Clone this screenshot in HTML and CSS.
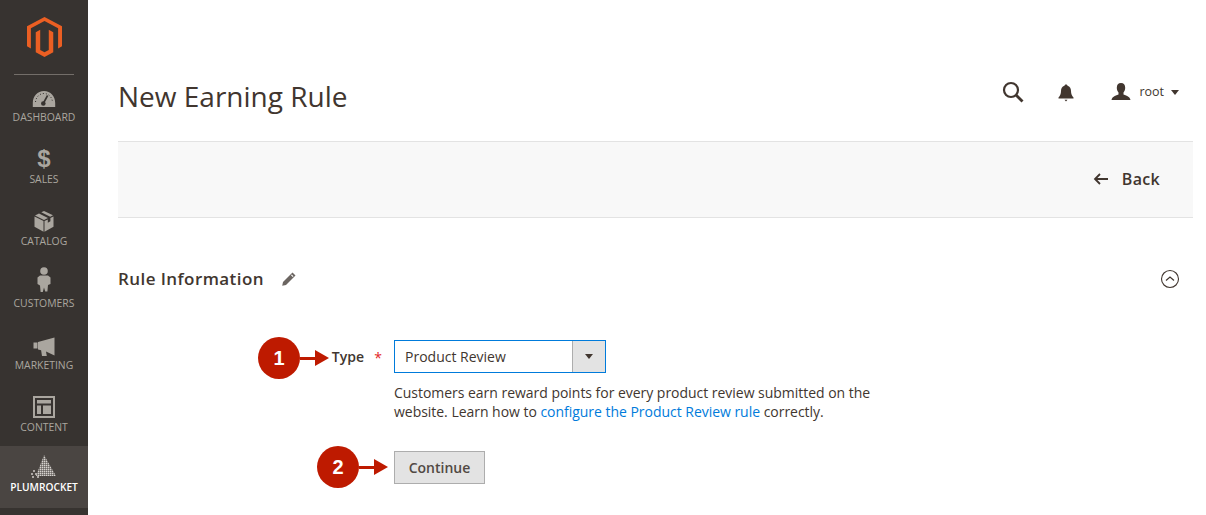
FILE: index.html
```html
<!DOCTYPE html>
<html lang="en">
<head>
<meta charset="utf-8">
<title>New Earning Rule</title>
<link rel="stylesheet" href="styles.css">
</head>
<body>
<div class="app">
  <nav class="side">
    <div class="logo">
      <svg width="35" height="40" viewBox="3 1.600 18 22.400" preserveAspectRatio="none"><path fill="#eb5f23" d="M12 24l-4.500-2.600V10.100l2.300-1.300v11.300l2.200 1.300 2.200-1.300V8.800l2.300 1.300v11.300zM21 6.800V18l-2 1.200V7.900L12 3.900 5 7.900v11.300L3 18V6.800l9-5.200z"/></svg>
    </div>
    <div class="rule"></div>
    <a class="item"><span class="ico"><svg width="24" height="18" viewBox="0 0 24 18"><path fill="#aaa69f" d="M12 1C5.500 1 .8 6.400.8 13v4h22.400v-4C23.200 6.400 18.500 1 12 1z"/><path stroke="#373330" stroke-width="1.600" d="M15.600 5.500L11.800 12.500"/><circle cx="11.300" cy="13.500" r="2.300" fill="#373330"/><path stroke="#373330" stroke-width="1" stroke-dasharray="1 2" fill="none" d="M3.500 12C4 7 7.500 3.500 12 3.500S20 7 20.500 12"/></svg></span><span class="lbl">DASHBOARD</span></a>
    <a class="item"><span class="ico ico-low"><span class="dollar">$</span></span><span class="lbl">SALES</span></a>
    <a class="item"><span class="ico"><svg width="20" height="21" viewBox="0 0 20 21"><path fill="#aaa69f" d="M10 0l9 4.300-2.800 1.500L7.300 1.300zM5 2.400l9 4.500-4 2L1 4.400zM.5 5.600l9 4.500v10.700l-9-5zM19.500 5.600v10.200l-9 5V10.100l3.300-1.700v3.300l2.600-1.400V6.900z"/></svg></span><span class="lbl">CATALOG</span></a>
    <a class="item"><span class="ico ico-up"><svg width="14" height="25" viewBox="0 0 14 25"><circle cx="7" cy="4" r="3.800" fill="#aaa69f"/><path fill="#aaa69f" d="M3 8.500h8l2.500 2v6.500l-2.500 1-.6 6.500H8.200L7 20.500 5.800 25H3.600L3 18.500 .5 17v-6.500z"/></svg></span><span class="lbl">CUSTOMERS</span></a>
    <a class="item"><span class="ico"><svg width="22" height="19" viewBox="0 0 22 19"><path fill="#aaa69f" d="M.5 5.500h4v6h-4zM5 5L21.500 .5v18L13 14.500l.8 4.500H9l-.9-5.800L5 12.500z"/></svg></span><span class="lbl">MARKETING</span></a>
    <a class="item"><span class="ico"><svg width="22" height="22" viewBox="0 0 22 22"><path fill="#aaa69f" fill-rule="evenodd" d="M0 0h22v22H0zM2 2v18h18V2z"/><path fill="#aaa69f" d="M4 4h14v3.500H4zM4 9.500h4V18H4zM10 9.500h8V18h-8z"/></svg></span><span class="lbl">CONTENT</span></a>
    <a class="item active"><span class="ico"><svg width="28" height="23" viewBox="0 0 28 23"><defs><pattern id="dots" width="2" height="2" patternUnits="userSpaceOnUse"><rect width="1.500" height="1.500" fill="#d5d2ce"/></pattern></defs><path fill="url(#dots)" d="M14 0L26 21H6z"/><path fill="#d5d2ce" opacity=".7" d="M3 15h2v2H3zM1 18h2v2H1zM5 18h2v2H5zM2 21h2v2H2zM7 21h2v2H7z"/></svg></span><span class="lbl">PLUMROCKET</span></a>
  </nav>
  <main class="main">
    <header class="top">
      <h1 class="title">New Earning Rule</h1>
      <div class="tools">
        <svg class="t-search" width="22" height="22" viewBox="0 0 22 22"><circle cx="9" cy="9" r="7" fill="none" stroke="#41362f" stroke-width="2.200"/><path d="M14 14l6.500 6.500" stroke="#41362f" stroke-width="2.800"/></svg>
        <svg class="t-bell" width="16" height="18" viewBox="0 0 16 18"><path fill="#41362f" d="M8 0.500c1 0 1.500.6 1.500 1.300 2.500.7 3.500 2.800 3.500 5.200 0 3 1 5 2.500 6.500v1H.5v-1C2 12 3 10 3 7c0-2.400 1-4.500 3.500-5.200C6.500 1.100 7 .5 8 .5zM6.500 15.800h3L8 17.500z"/></svg>
        <span class="user">
          <svg width="20" height="18" viewBox="0 0 20 18"><path fill="#41362f" d="M10 0c2.800 0 4.200 2 4.200 4.800 0 2-.8 3.700-1.700 4.700v2c1 .7 6.500 1.500 7 5.500H.5c.5-4 6-4.800 7-5.500v-2C6.600 8.500 5.800 6.800 5.800 4.800 5.800 2 7.200 0 10 0z"/></svg>
          <span class="uname">root</span><span class="caret"></span>
        </span>
      </div>
    </header>
    <div class="bar">
      <a class="back"><svg width="16" height="12" viewBox="0 0 16 12"><path d="M15 6H2M7 1L2 6l5 5" fill="none" stroke="#41362f" stroke-width="1.800"/></svg><span>Back</span></a>
    </div>
    <section class="sec-head">
      <h2 class="sec-title">Rule Information</h2>
      <svg class="pen" width="16" height="16" viewBox="0 0 16 16"><path fill="#6b6561" d="M11.500 1.500l3 3L5 14l-3.800.8.800-3.800z"/><path fill="#fff" d="M10 4.300l.8-.8 1.700 1.700-.8.800z"/></svg>
      <svg class="collapse" width="20" height="20" viewBox="0 0 20 20"><circle cx="10" cy="10" r="8.500" fill="none" stroke="#41362f" stroke-width="1.100"/><path d="M6 11.500l4-3.500 4 3.500" fill="none" stroke="#41362f" stroke-width="1.200"/></svg>
    </section>
    <form class="form">
      <div class="row">
        <label class="label">Type</label><span class="req">*</span>
        <div class="field">
          <div class="select"><span class="val">Product Review</span><span class="sbtn"><i></i></span></div>
          <p class="note">Customers earn reward points for every product review submitted on the website. Learn how to <a class="link">configure the Product Review rule</a> correctly.</p>
        </div>
        <span class="call c1"><b>1</b><i class="shaft"></i><i class="head"></i></span>
      </div>
      <div class="row act">
        <div class="field">
          <button type="button" class="btn">Continue</button>
        </div>
        <span class="call c2"><b>2</b><i class="shaft"></i><i class="head"></i></span>
      </div>
    </form>
  </main>
</div>
</body>
</html>
```

FILE: styles.css
```css
* { box-sizing: border-box; }
html, body { margin: 0; height: 515px; overflow: hidden; background: #fff; }
body { font-family: "Open Sans", sans-serif; color: #41362f; }
.app { display: flex; height: 515px; }
.side { width: 88px; flex: none; background: #373330; display: flex; flex-direction: column; align-items: stretch; }
.logo { height: 74px; padding-top: 17px; display: flex; justify-content: center; align-items: flex-start; }
.rule { height: 1px; margin: 0 14px -1px; background: #736e69; }
.item { height: 62px; display: flex; flex-direction: column; align-items: center; padding-top: 7px; }
.ico { height: 27px; display: flex; align-items: flex-end; justify-content: center; }
.ico-up { padding-bottom: 2px; }
.ico-low { align-items: flex-start; padding-top: 2px; }
.lbl { font-size: 10.4px; line-height: 14px; margin-top: 2px; color: #aaa69f; white-space: nowrap; }
.dollar { font-family: "Liberation Sans", sans-serif; font-weight: 700; font-size: 24px; line-height: 27px; color: #aaa69f; }
.item.active { background: #4a4542; padding-top: 6px; }
.item.active .ico { height: 26px; }
.item.active .lbl { color: #fff; font-weight: 600; font-size: 10.2px; }
.main { flex: 1; padding: 0 13px 0 30px; min-width: 0; }
.top { height: 141px; display: flex; justify-content: space-between; align-items: flex-start; }
.title { margin: 75px 0 0; font-size: 28px; line-height: 42px; font-weight: 400; }
.tools { display: flex; align-items: center; padding-top: 81px; margin-right: 4px; }
.t-search { margin-right: 34px; }
.t-bell { margin-right: 37px; margin-top: 2px; }
.user { display: flex; align-items: center; margin-right: 10px; }
.uname { font-size: 12.5px; margin-left: 8px; color: #41362f; margin-top: -1px; }
.caret { width: 0; height: 0; border: 4px solid transparent; border-top: 5px solid #41362f; border-bottom: 0; margin-left: 7px; }
.bar { height: 77px; background: #f8f8f8; border-top: 1px solid #e3e3e3; border-bottom: 1px solid #e3e3e3; display: flex; align-items: center; justify-content: flex-end; padding-right: 33px; padding-bottom: 2px; }
.back { display: flex; align-items: center; gap: 13px; font-size: 16px; font-weight: 600; letter-spacing: .3px; }
.sec-head { display: flex; align-items: center; height: 40px; margin-top: 41px; }
.sec-title { margin: 0; font-size: 17px; font-weight: 600; line-height: 24px; letter-spacing: .42px; }
.pen { margin-left: 17px; }
.collapse { margin-left: auto; margin-right: 13px; }
.form { margin-top: 41px; }
.row { position: relative; display: flex; align-items: flex-start; }
.label { width: 246px; text-align: right; font-size: 14px; font-weight: 600; line-height: 34px; }
.req { width: 30px; padding-right: 2px; text-align: center; color: #e22626; font-size: 14px; line-height: 36px; }
.field { width: 500px; }
.select { width: 212px; height: 33px; border: 1px solid #007bdb; display: flex; align-items: stretch; background: #fff; }
.val { flex: 1; font-size: 14px; line-height: 31px; padding-left: 10px; }
.sbtn { width: 33px; background: #e3e3e3; border-left: 1px solid #adadad; display: flex; align-items: center; justify-content: center; }
.sbtn i { width: 0; height: 0; border: 4px solid transparent; border-top: 5px solid #41362f; border-bottom: 0; }
.note { margin: 10px 0 0; width: 490px; font-size: 14px; line-height: 19px; letter-spacing: -.03px; }
.link { color: #007bdb; }
.act { margin-top: 30px; padding-left: 276px; }
.btn { width: 91px; height: 33px; background: #e3e3e3; border: 1px solid #adadad; font: 600 14px "Open Sans", sans-serif; color: #514943; padding: 0; }
.call { position: absolute; display: flex; align-items: center; }
.call b { width: 42px; height: 42px; border-radius: 50%; background: #be1a00; color: #fff; font: 700 20px/42px "Liberation Sans", sans-serif; text-align: center; flex: none; }
.shaft { width: 15px; height: 3px; background: #be1a00; }
.head { width: 0; height: 0; border-style: solid; border-width: 8px 0 8px 14px; border-color: transparent transparent transparent #be1a00; }
.c1 { left: 140px; top: -3px; }
.c2 { left: 199px; top: -5px; }
```
